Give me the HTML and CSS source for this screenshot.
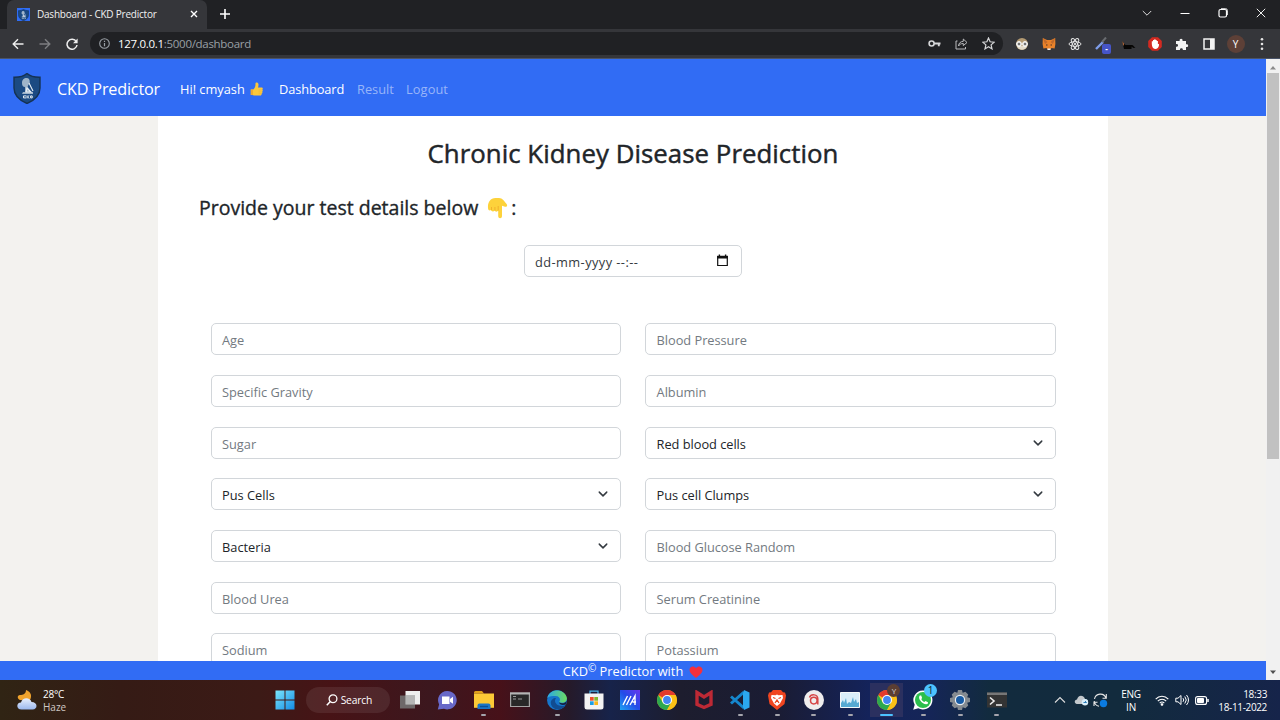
FILE: index.html
```
<!DOCTYPE html>
<html lang="en">
<head>
<meta charset="utf-8">
<title>Dashboard - CKD Predictor</title>
<link rel="stylesheet" href="styles.css">
</head>
<body>
<svg class="defs" width="0" height="0">
  <defs>
    <linearGradient id="win" x1="0" y1="0" x2="1" y2="1"><stop offset="0" stop-color="#7be6fb"/><stop offset="1" stop-color="#138be6"/></linearGradient>
    <linearGradient id="edge" x1="0" y1="0" x2="1" y2="0"><stop offset="0" stop-color="#2aa7e8"/><stop offset="1" stop-color="#6cdc60"/></linearGradient>
    <linearGradient id="mapp" x1="0" y1="1" x2="1" y2="0"><stop offset="0" stop-color="#1fa5f5"/><stop offset=".5" stop-color="#234be8"/><stop offset="1" stop-color="#6a35ee"/></linearGradient>
    <linearGradient id="cloud" x1="0" y1="0" x2="0" y2="1"><stop offset="0" stop-color="#e8effc"/><stop offset="1" stop-color="#9bb8ee"/></linearGradient>
    <symbol id="shield" viewBox="0 0 28 31">
      <path d="M14 .5C10.500 3.500 5.500 4.300 1 4.200V15c0 7.500 6 12.500 13 15.500 7-3 13-8 13-15.500V4.200C22.500 4.300 17.500 3.500 14 .5z" fill="#1b4a82" stroke="#153253" stroke-width="1.400"/>
      <path d="M9 10c0-3.500 2-5 4.500-5s3.500 2 3.200 4.500c-.3 2-2 2.500-2 4.500l3.300 5h2v2H9l1-2h2v-5c-2 0-3-1.500-3-4z" fill="#9fb4c9"/>
      <path d="M16 10l4 8M14 15l-1 4h5z" stroke="#e8eff5" stroke-width="1.100" fill="none"/>
      <path d="M13 22.900h-2.500v2H13M14 22.400v3M16.300 22.400L14.500 24l1.800 1.400M17.600 22.900v2h1.600v-2z" fill="none" stroke="#e6edf2" stroke-width="1"/>
    </symbol>
    <symbol id="chrome" viewBox="0 0 20 20">
      <circle cx="10" cy="10" r="10" fill="#fbc116"/>
      <path d="M10 10L1.340 5A10 10 0 0 1 18.660 5z" fill="#e33b2e"/>
      <path d="M1.340 5A10 10 0 0 0 10 20l4.300-7.500L10 10 5.700 12.500z" fill="#2da94f"/>
      <path d="M10 5h8.660A10 10 0 0 1 10 20l4.330-7.500z" fill="#fbc116"/>
      <circle cx="10" cy="10" r="5" fill="#fff"/><circle cx="10" cy="10" r="3.900" fill="#4285f4"/>
    </symbol>
    <symbol id="chev" viewBox="0 0 16 16"><path d="M2 5l6 6 6-6" fill="none" stroke="#343a40" stroke-width="2.300" stroke-linecap="round" stroke-linejoin="round"/></symbol>
  </defs>
</svg>

<div class="tabstrip">
  <div class="tab">
    <span class="favicon"><svg width="11" height="12"><use href="#shield"/></svg></span>
    <span class="tab-title">Dashboard - CKD Predictor</span>
    <svg class="tab-close" width="8" height="8" viewBox="0 0 8 8"><path d="M1 1l6 6M7 1L1 7" stroke="#fff" stroke-width="1.400"/></svg>
  </div>
  <svg class="newtab" width="12" height="12" viewBox="0 0 12 12"><path d="M6 1v10M1 6h10" stroke="#fff" stroke-width="1.600"/></svg>
  <div class="winctl">
    <svg width="10" height="10" viewBox="0 0 10 10"><path d="M.8 3L5 7.200 9.200 3" fill="none" stroke="#ddd"/></svg>
    <svg width="10" height="10" viewBox="0 0 10 10"><path d="M.5 5.500h9" stroke="#fff"/></svg>
    <svg width="10" height="10" viewBox="0 0 10 10"><rect x="1" y="1.500" width="7.500" height="7.500" rx="1.500" fill="none" stroke="#fff" stroke-width="1.200"/><path d="M3 .6h4.500a2 2 0 0 1 2 2V7" fill="none" stroke="#fff" stroke-width=".8"/></svg>
    <svg width="10" height="10" viewBox="0 0 10 10"><path d="M.8.8l8.400 8.400M9.200.8L.8 9.200" stroke="#eee"/></svg>
  </div>
</div>

<div class="toolbar">
  <svg class="nav-ic" width="12" height="12" viewBox="0 0 12 12"><path d="M11.500 6H1.500M6 1.200L1.200 6 6 10.800" fill="none" stroke="#eee" stroke-width="1.400"/></svg>
  <svg class="nav-ic" width="12" height="12" viewBox="0 0 12 12"><path d="M.5 6h10M6 1.200L10.800 6 6 10.800" fill="none" stroke="#7d7e81" stroke-width="1.400"/></svg>
  <svg class="nav-ic" width="12" height="12" viewBox="0 0 12 12"><path d="M10.300 3.600A5 5 0 1 0 11 7" fill="none" stroke="#eee" stroke-width="1.500"/><path d="M11.600.5v4.700H7z" fill="#eee"/></svg>
  <div class="omnibox">
    <svg width="11" height="11" viewBox="0 0 11 11"><circle cx="5.500" cy="5.500" r="4.800" fill="none" stroke="#9aa0a6" stroke-width="1.100"/><path d="M5.500 5v3.200M5.500 2.700v1.200" stroke="#9aa0a6" stroke-width="1.200"/></svg>
    <span class="url">127.0.0.1<i>:5000/dashboard</i></span>
    <div class="omni-icons">
      <svg width="13" height="13" viewBox="0 0 13 13"><circle cx="3.600" cy="6.500" r="2.500" fill="none" stroke="#d5d6d8" stroke-width="1.600"/><path d="M6 6.500h6.500M10.800 6.500v2.800" stroke="#d5d6d8" stroke-width="1.900"/></svg>
      <svg width="13" height="13" viewBox="0 0 13 13"><path d="M2.500 4H1v8h9.500v-2" fill="none" stroke="#b9babc"/><path d="M3.500 9c.3-3 2-4.500 4.800-4.700V2L12 5.500 8.300 8.600V6.500C6 6.500 4.600 7.300 3.500 9z" fill="none" stroke="#b9babc"/></svg>
      <svg width="13" height="13" viewBox="0 0 13 13"><path d="M6.500 1l1.600 3.800 4.100.4-3.100 2.700.9 4-3.500-2.100L3 11.900l.9-4L.8 5.200l4.100-.4z" fill="none" stroke="#d5d6d8" stroke-width="1.200"/></svg>
    </div>
  </div>
  <div class="exts">
    <svg viewBox="0 0 14 14"><circle cx="7" cy="7" r="6" fill="#b39a72"/><path d="M2 9h10c-1 5-9 5-10 0z" fill="#e3dccb"/><circle cx="4" cy="7" r="2.400" fill="#ccc" stroke="#fff"/><circle cx="10" cy="7" r="2.400" fill="#ccc" stroke="#fff"/><path d="M3 7h2M9 7h2" stroke="#555" stroke-width="1.400"/></svg>
    <svg viewBox="0 0 14 14"><path d="M.8 1L5 3h4l4.200-2 .2 6-.8 4.500L9.500 11 8 13H6l-1.500-2-3.100.5L.6 7z" fill="#e8822a"/><path d="M.8 1l4.700 4L3 7zM13.200 1L8.500 5 11 7z" fill="#c06a2b"/><path d="M5.500 11.500h3V13h-3z" fill="#eee"/><path d="M4 8h1.500M8.500 8H10" stroke="#493129"/></svg>
    <svg viewBox="0 0 14 14" fill="none" stroke="#e6e6e6"><ellipse cx="7" cy="7" rx="6" ry="2.300"/><ellipse cx="7" cy="7" rx="6" ry="2.300" transform="rotate(60 7 7)"/><ellipse cx="7" cy="7" rx="6" ry="2.300" transform="rotate(120 7 7)"/><circle cx="7" cy="7" r="1" fill="#fff" stroke="none"/></svg>
    <span class="picker"><svg viewBox="0 0 14 14"><path d="M1 12l7-7" stroke="#7e9de8" stroke-width="2.400"/><path d="M7 5l4-4.500" stroke="#696c70" stroke-width="2"/></svg><b>-</b></span>
    <svg viewBox="0 0 14 14"><path d="M.3 4l1.500 2.500L3.500 8h6.300c2 0 1.500 2.300 3.700 2.200-1.500 1.300-3 .8-3.800-.7L9.500 12H2L1.300 9z" fill="#060504"/><path d="M.3 4l1.900 3L1.200 9z" fill="#b86b3d"/></svg>
    <svg viewBox="0 0 14 14"><path d="M4 .2h6L13.800 4v6L10 13.800H4L.2 10V4z" fill="#d42a21"/><path d="M3.800 7V4.300h1.200V3h1.300v-.8h1.200V3h1.200v1h1.200v3.200l1.200-.5c0 3.300-1.400 5-3.300 5.300C5.300 12 3.800 10 3.800 7z" fill="#fff"/></svg>
    <svg viewBox="0 0 14 14"><path d="M1 4h3.700c-.8-3 3.600-3 2.800 0H11v3.300c2.900-.8 2.900 3.400 0 2.700V13H7.800c.7-2.500-3.500-2.500-2.800 0H1V9.800c2.700.6 2.700-3.300 0-2.600z" fill="#f3f3f3"/></svg>
    <svg viewBox="0 0 14 14"><path d="M2 2h10v10H2z" fill="none" stroke="#f3f3f3" stroke-width="1.500"/><path d="M8 2h4v10H8z" fill="#f3f3f3"/></svg>
    <span class="avatar">Y</span>
    <svg viewBox="0 0 14 14" fill="#e6e6e6"><circle cx="7" cy="2.300" r="1.300"/><circle cx="7" cy="7" r="1.300"/><circle cx="7" cy="11.700" r="1.300"/></svg>
  </div>
</div>

<div class="viewport">
  <div class="page">
    <nav class="navbar">
      <svg class="logo" width="28" height="31"><use href="#shield"/></svg>
      <span class="brand">CKD Predictor</span>
      <span class="link hi">Hi! cmyash</span>
      <svg class="thumb" width="13" height="14" viewBox="0 0 13 14"><path d="M.8 7.500h2.500C5 6 5.500 4.500 5.500 1.500 5.500 0 8.300.2 8.500 2.500c.1 1.400-.3 2.200-.6 3h3.800c1.300 0 1.400 1.900.5 2.300.9.500.7 1.700-.1 2 .6.600.3 1.600-.5 1.800.3.900-.3 2-1.300 2H5c-1.500 0-2-.6-4.200-.6z" fill="#fcc83c"/><path d="M.8 7.500H3V13H.8z" fill="#f0ab31"/><path d="M8.500 7.900h3.300M8.500 9.900h3.300M8.500 11.700h2.700" stroke="#eeb030" stroke-width=".5"/></svg>
      <span class="link dash">Dashboard</span>
      <span class="link dim result">Result</span>
      <span class="link dim logout">Logout</span>
    </nav>
    <main class="sheet">
      <h1>Chronic Kidney Disease Prediction</h1>
      <h2><span>Provide your test details below</span><svg width="21" height="22" viewBox="0 0 21 22"><path d="M1 11C.5 6 3 1 8.500 1h3.500c3.500 0 5.500 3.500 7.600 6 1.500 2.300-.6 3.500-2.300 2.500l-2.300-.8V19c0 3-3.800 3-3.800 0v-5.500c-.6 1.500-3.200 1.500-3.500 0-.8 1.300-3.300 1.300-3.700-.5C3 14 1 13.500 1 11z" fill="#fdd23b"/><path d="M4.500 13v-3M7.900 13.500V10M11.200 13.500V9" stroke="#efa82a" stroke-width=".8"/></svg><span>:</span></h2>
      <div class="field date"><span>dd-mm-yyyy --:--</span><svg width="13" height="13" viewBox="0 0 13 13"><path d="M1.700 2.500h9.600v9H1.700z" fill="none" stroke="#111" stroke-width="1.200"/><path d="M1.200 1.800h10.600v2.700H1.200zM2.700.5h1.400v2H2.700zM8.900.5h1.400v2H8.900z" fill="#111"/></svg></div>
      <form class="grid">
        <div class="field">Age</div><div class="field">Blood Pressure</div>
        <div class="field">Specific Gravity</div><div class="field">Albumin</div>
        <div class="field">Sugar</div><div class="field select">Red blood cells<svg width="10" height="10"><use href="#chev"/></svg></div>
        <div class="field select">Pus Cells<svg width="10" height="10"><use href="#chev"/></svg></div><div class="field select">Pus cell Clumps<svg width="10" height="10"><use href="#chev"/></svg></div>
        <div class="field select">Bacteria<svg width="10" height="10"><use href="#chev"/></svg></div><div class="field">Blood Glucose Random</div>
        <div class="field">Blood Urea</div><div class="field">Serum Creatinine</div>
        <div class="field">Sodium</div><div class="field">Potassium</div>
      </form>
    </main>
    <footer class="footer"><span>CKD<sup>©</sup> Predictor with</span><svg width="14" height="12" viewBox="0 0 14 12"><path d="M7 12C3 9 .5 6.800.5 3.800.5.400 5-.8 7 2.300 9-.8 13.500.400 13.500 3.800 13.500 6.800 11 9 7 12z" fill="#f5303d"/></svg></footer>
  </div>
  <div class="scrollbar">
    <svg width="8" height="5" viewBox="0 0 8 5"><path d="M1 4.500L4 1l3 3.500z" fill="#8b8b8b"/></svg>
    <div class="thumbbar"></div>
    <svg width="8" height="5" viewBox="0 0 8 5"><path d="M1 .5L4 4 7 .5z" fill="#505050"/></svg>
  </div>
</div>

<div class="taskbar">
  <div class="weather">
    <svg width="22" height="22" viewBox="0 0 22 22"><path d="M10 1c3 1 7 4 4 10H4C1 10 1 6 4 6c3 0 6-1 6-5z" fill="#f0a32d"/><path d="M5.500 20.500C0 20.500 0 13.500 5 13.500 6.500 8 14 8 15.500 13c6.500 0 6.500 7.500 1 7.500z" fill="url(#cloud)"/></svg>
    <div><p>28°C</p><p class="haze">Haze</p></div>
  </div>
  <div class="apps">
    <span class="app start"><svg viewBox="0 0 20 20"><path d="M.5.5h9v9h-9zM10.500.5h9v9h-9zM.5 10.500h9v9h-9zM10.500 10.500h9v9h-9z" fill="url(#win)"/></svg></span>
    <span class="search"><svg width="12" height="12" viewBox="0 0 12 12"><circle cx="7" cy="4.800" r="3.900" fill="none" stroke="#fff" stroke-width="1.300"/><path d="M4.300 7.600L.8 11.200" stroke="#fff" stroke-width="1.500"/></svg>Search</span>
    <span class="app"><svg viewBox="0 0 20 20"><path d="M5.500 1H20v13.500H5.500z" fill="#eee"/><path d="M0 5.500h15V18.500H0z" fill="#777" opacity=".85"/><path d="M5.500 5.500H15v9H5.500z" fill="#b5b5b5"/></svg></span>
    <span class="app"><svg viewBox="0 0 20 20"><path d="M10 1a9.200 9.200 0 1 1-3 17.700L.8 19.500l1.300-5A9.200 9.200 0 0 1 10 1z" fill="#6868c8"/><path d="M5 6.500h7.500v7.500H5zM13 9l3-2.200v7L13 11.700z" fill="#fff"/></svg></span>
    <span class="app run"><svg viewBox="0 0 20 20"><path d="M0 2.500q0-1.500 1.500-1.500H8l2 2.500H0z" fill="#e2a11b"/><path d="M0 3.500h20v14.300H0z" fill="#fcc936"/><path d="M3.500 19v-3.500q0-2 2-2h9q2 0 2 2V19z" fill="#1b75c8"/><path d="M6 15.800h8v1.400H6z" fill="#0b4f97"/></svg></span>
    <span class="app"><svg viewBox="0 0 20 20"><path d="M.6 3.100h18.800v13.400H.6z" fill="#282828" stroke="#a3a3a3" stroke-width="1.200"/><path d="M0 2.500h20v2H0z" fill="#b5b5b5"/><path d="M3 6.500h3M3 9h3M8 9h4" stroke="#999"/></svg></span>
    <span class="app run"><svg viewBox="0 0 20 20"><circle cx="10" cy="10" r="10" fill="#1675cb"/><path d="M.3 8C2-2 18-2 19.900 8c.4 4-4 6-7.900 4 2-1.800 1-6-3.500-6-3.200 0-6 0-8.200 2z" fill="url(#edge)"/><path d="M9 8c-3 4 1 8.500 6.500 8 1.500 0 2.500-.5 3-.8-3 5-10 5.600-13.500 1.300C2 12 5 8 9 8z" fill="#114c91"/><path d="M12 12.500c3 1.500 6 .8 7.600-1.500l-.8 3.400c-3 1-6.300.5-6.800-1.900z" fill="#17203c"/></svg></span>
    <span class="app"><svg viewBox="0 0 20 20"><path d="M6 4V1.200h8V4" fill="none" stroke="#4bb5ed" stroke-width="1.200"/><path d="M.5 3.500h19V17q0 2.500-2.500 2.500H3Q.5 19.500.5 17z" fill="#f3f3f3"/><path d="M6 7h3.700v3.700H6z" fill="#ed512a"/><path d="M10.300 7H14v3.700h-3.700z" fill="#80b82f"/><path d="M6 11.300h3.700V15H6z" fill="#1b9fe5"/><path d="M10.300 11.300H14V15h-3.700z" fill="#f9b51a"/></svg></span>
    <span class="app"><svg viewBox="0 0 20 20"><path d="M0 0h20v20H0z" fill="url(#mapp)"/><path d="M3 15L7.500 6M6.500 15L11 6M10 15l5-9V15M12.500 12H16" stroke="#fff" stroke-width="1.400" fill="none"/></svg></span>
    <span class="app"><svg><use href="#chrome"/></svg></span>
    <span class="app"><svg viewBox="0 0 20 20"><path d="M3 2.500L10 7l7-4.500v11.800L10 17.500l-7-3.200z" fill="none" stroke="#bd2935" stroke-width="3.400"/></svg></span>
    <span class="app run"><svg viewBox="0 0 20 20"><path d="M1 6.500L14 18M1 13.500L14 2" stroke="#1587ce" stroke-width="3"/><path d="M14 0l5.500 2.400v15.200L14 20l-1-3V3z" fill="#2ba8ef"/></svg></span>
    <span class="app run"><svg viewBox="0 0 20 20"><path d="M6 0h8l2 2.200 2 .3 1 3-1.500 8.500L10 20l-7.500-6L1 5.500l1-3 2-.3z" fill="#f04520"/><path d="M4.500 5l4 .2L10 4.500l1.500.7 4-.2.500 3-3 5.500L10 16l-3-2.500L4 8z" fill="#fff"/><path d="M6 7.500l2.500 1M14 7.500l-2.500 1M8 13l2-3 2 3" stroke="#e8431e" fill="none" stroke-width="1.300"/></svg></span>
    <span class="app run"><svg viewBox="0 0 20 20"><circle cx="10" cy="10" r="10" fill="#efeded"/><circle cx="9.800" cy="10.600" r="3.300" fill="none" stroke="#d64646" stroke-width="1.500"/><path d="M5.500 7.500c1.500-4 8.300-3.500 8.300 1.500v5.500" fill="none" stroke="#d64646" stroke-width="1.500"/></svg></span>
    <span class="app run"><svg viewBox="0 0 20 20"><path d="M.5 2.500h19v15H.5z" fill="#d9edf8" stroke="#f5f7f8"/><path d="M1 17v-4l2-3 1 3 2-5 1 6 2-2 2 1 2-6 1 5 2-3 1 4 2-1v5z" fill="#56a9d2"/></svg></span>
    <span class="app run active"><svg><use href="#chrome"/></svg><b class="mini">Y</b></span>
    <span class="app run"><svg viewBox="0 0 20 20"><path d="M10 .5a9.500 9.500 0 1 1-4.700 17.800L.2 19.800l1.500-5A9.500 9.500 0 0 1 10 .5z" fill="#fff"/><circle cx="10" cy="10" r="8" fill="#2cbf4d"/><path d="M6.800 5.500c-3 3 4 10.500 8 8.300l.2-1.600-2.500-1.300-1.200 1c-1.500-.5-2.500-1.600-3-3l.8-1-.9-2.500z" fill="#fff"/></svg><b class="count">1</b></span>
    <span class="app run"><svg viewBox="0 0 20 20"><path d="M8 0h4l.7 2.700 2.700-1 2.800 2.800-1 2.800L20 8v4l-2.800.7 1 2.800-2.800 2.800-2.700-1L12 20H8l-.7-2.700-2.700 1-2.800-2.800 1-2.800L0 12V8l2.800-.7-1-2.800 2.800-2.800 2.700 1z" fill="#858b91"/><circle cx="10" cy="10" r="5.200" fill="#e8edf2"/><circle cx="10" cy="10" r="4" fill="#175ba5"/></svg></span>
    <span class="app run"><svg viewBox="0 0 20 20"><path d="M0 2.500h20v15H0z" fill="#343434"/><path d="M0 2.500h20V5H0z" fill="#777"/><path d="M3 7.500l4 3.500-4 3.500M9 15h6" fill="none" stroke="#eee" stroke-width="1.600"/></svg></span>
  </div>
  <div class="tray">
    <svg width="12" height="8" viewBox="0 0 12 8"><path d="M1 6.500l5-5 5 5" fill="none" stroke="#ddd" stroke-width="1.100"/></svg>
    <svg class="od" width="15" height="12" viewBox="0 0 15 12"><path d="M3 10C-.5 9.500.500 5.500 3 5.500 4 .5 9.500.5 11 5c3.500 0 4 5 .5 5z" fill="#c3c8cc"/><circle cx="11" cy="8.300" r="3.200" fill="#d8eefa"/><path d="M9.500 8.500h3M11 7l1.500 1.500" stroke="#2b7db8"/></svg>
    <svg class="sync" width="15" height="15" viewBox="0 0 15 15"><path d="M1.500 6A6 6 0 0 1 13 5M13.300 1v4.200H9.500M1.200 8A6 6 0 0 0 6 13.200M1 13V9.200h3.500" fill="none" stroke="#e7e7e7" stroke-width="1.100"/><circle cx="10.500" cy="10.500" r="3.700" fill="#0b7be0"/></svg>
    <p class="lang">ENG<br>IN</p>
    <svg class="wifi" width="14" height="11" viewBox="0 0 14 11" fill="none" stroke="#fff" stroke-width="1.100"><path d="M.7 4.200c3.500-4 9-4 12.600 0M2.800 6.200c2.500-2.700 6-2.700 8.400 0M4.700 8.100c1.500-1.500 3.200-1.500 4.600 0"/><circle cx="7" cy="9.500" r=".8" fill="#fff"/></svg>
    <svg class="vol" width="14" height="12" viewBox="0 0 14 12" fill="none" stroke="#fff" stroke-width="1"><path d="M.8 4.200H3L6 1.500v9L3 7.800H.8zM8 4.200q1.500 1.800 0 3.600M9.800 2.500q3 3.500 0 7M11.500 1q4 5 0 10"/></svg>
    <svg width="14" height="9" viewBox="0 0 14 9"><rect x=".6" y=".6" width="11" height="7.800" rx="2" fill="none" stroke="#fff" stroke-width="1.100"/><rect x="2" y="2" width="7" height="5" rx="1" fill="#fff"/><path d="M13 3v3" stroke="#fff" stroke-width="1.500"/></svg>
    <p class="clock">18:33<br><span>18-11-2022</span></p>
  </div>
</div>
</body>
</html>
```
FILE: styles.css
```
* { box-sizing: border-box; }
body { margin: 0; width: 1280px; height: 720px; overflow: hidden; display: flex; flex-direction: column; font-family: "Open Sans", "Noto Sans", sans-serif; color: #212529; }
p, h1, h2 { margin: 0; }
svg { display: block; flex: none; }
.defs { position: absolute; }

.tabstrip { height: 29px; flex: none; background: #202124; display: flex; align-items: center; }
.tab { width: 200px; height: 29px; margin-left: 7px; background: #35363a; border-radius: 7px 7px 0 0; display: flex; align-items: center; padding: 0 9px 0 10px; }
.favicon { width: 13px; height: 13px; background: #2f6df4; display: flex; justify-content: center; align-items: center; }
.tab-title { color: #f1f1f1; font-size: 10px; letter-spacing: -.22px; margin: -2px 0 0 7px; white-space: nowrap; flex: 1; }
.tab-close { margin-top: -1px; }
.newtab { margin: -1px 0 0 12px; }
.winctl { margin-left: auto; display: flex; gap: 28px; padding-right: 14px; margin-top: -4px; }

.toolbar { height: 30px; flex: none; background: #35363a; border-bottom: 1px solid #4a5468; display: flex; align-items: center; }
.nav-ic { margin-left: 12px; }
.nav-ic + .nav-ic { margin-left: 15px; }
.omnibox { width: 913px; height: 23px; margin-left: 12px; border-radius: 12px; background: #202124; display: flex; align-items: center; padding: 0 8px 0 9px; }
.url { color: #fff; font-size: 11.500px; letter-spacing: -.3px; margin-left: 8px; }
.url i { font-style: normal; color: #9aa0a6; }
.omni-icons { margin-left: auto; display: flex; gap: 14px; }
.exts { display: flex; align-items: center; gap: 12.700px; margin-left: 12px; }
.exts > svg, .picker svg { width: 14px; height: 14px; }
.picker { position: relative; width: 14px; }
.picker b { position: absolute; left: 7px; top: 7px; width: 9px; height: 10px; border-radius: 2px; background: #4655c8; color: #fff; font-size: 8px; line-height: 9px; text-align: center; }
.avatar { width: 18px; height: 18px; margin: 0 -2px; border-radius: 50%; background: #5d4037; color: #fff; font-size: 10px; line-height: 18px; text-align: center; }

.viewport { height: 621px; flex: none; display: flex; }
.page { width: 1266px; display: flex; flex-direction: column; background: #f3f2ef; }
.navbar { height: 57px; flex: none; background: #316cf4; display: flex; align-items: center; padding: 2px 0 0 13px; color: #fff; white-space: nowrap; }
.brand { font-size: 16.200px; margin-left: 16px; width: 123px; letter-spacing: -.18px; }
.link { font-size: 12.800px; }
.hi { width: 70px; }
.thumb { width: 13px; margin-right: 16px; }
.dash { width: 78px; letter-spacing: -.1px; }
.result { width: 49px; }
.logout { letter-spacing: .1px; }
.dim { color: #98b5f9; }

.sheet { width: 950px; height: 545px; flex: none; overflow: hidden; margin-left: 158px; background: #fff; padding: 18px 40px 0; display: flex; flex-direction: column; }
.sheet > * { flex: none; }
h1 { font-weight: 500; font-size: 25.800px; letter-spacing: .04px; line-height: 38px; text-align: center; white-space: nowrap; -webkit-text-stroke: .45px #212529; }
h2 { font-weight: 500; font-size: 19.500px; line-height: 30px; margin-top: 21px; padding-left: 1px; display: flex; align-items: center; white-space: nowrap; -webkit-text-stroke: .35px #212529; }
h2 svg { margin: 0 3px 0 9px; -webkit-text-stroke: 0; }
.field { height: 32px; border: 1px solid #d2d6da; border-radius: 5px; padding: 2px 11px 0 10px; display: flex; align-items: center; justify-content: space-between; font-size: 12.800px; color: #737a81; white-space: nowrap; }
.field:nth-child(even) { padding-left: 10.600px; letter-spacing: -.03px; }
.select { color: #212529; }
.field.select { padding-right: 12px; }
.field.select svg { margin-top: -2px; }
.sheet .date { width: 218px; margin: 22px auto 0; color: #343a40; padding-left: 10px; letter-spacing: .43px; }
.date svg { margin-top: -3px; }
.date { padding-right: 12px; }
.grid { display: grid; grid-template-columns: 410px 411px; column-gap: 24px; row-gap: 19.700px; margin: 46.300px 0 0 13px; }
.footer { height: 19px; flex: none; background: #316cf4; color: #fff; font-size: 12.800px; line-height: 19px; display: flex; align-items: center; justify-content: center; gap: 6px; padding-top: 2px; white-space: nowrap; }
.footer sup { font-size: 10px; line-height: 0; vertical-align: 4px; }

.scrollbar { width: 14px; background: #f1f1f1; display: flex; flex-direction: column; align-items: center; padding: 6px 0 5px; }
.thumbbar { width: 12px; height: 386px; margin: 3px 0 auto; background: #c1c1c1; }

.taskbar { height: 40px; flex: none; position: relative; display: flex; color: #fff; font-size: 10px; background: linear-gradient(90deg, #302414 0, #351b15 120px, #3c1a16 260px, #471316 330px, #3c171e 430px, #471119 500px, #251a2a 570px, #17234a 610px, #1d1d2e 680px, #1a1c34 780px, #14235b 870px, #152557 930px, #122b3e 990px, #122b3d 1120px, #16244a 1280px); }
.weather { width: 266.500px; padding-left: 16px; display: flex; align-items: center; gap: 5px; }
.weather p { line-height: 13px; letter-spacing: -.2px; padding-top: 1px; margin-bottom: -1px; }
.weather .haze { color: #cfc8c4; letter-spacing: 0; }
.apps { display: flex; align-items: center; }
.app { position: relative; width: 36.650px; height: 34px; display: flex; align-items: center; justify-content: center; }
.app svg { width: 20px; height: 20px; }
.run::after { content: ""; position: absolute; bottom: 1px; left: 16px; width: 5px; height: 2px; border-radius: 1px; background: #a5a5ad; }
.active { background: linear-gradient(90deg, transparent 2px, #2b305f 2px, #2b305f 35px, transparent 35px); }
.active::after { left: 12px; width: 13px; background: #4cc2ff; }
.mini, .count { position: absolute; left: 19px; top: 1px; width: 13px; height: 13px; border-radius: 50%; font-weight: 400; font-size: 8px; line-height: 13px; text-align: center; background: #5b3e33; color: #ddd; }
.count { background: #4cc2ff; color: #10202c; font-size: 10px; }
.search { width: 84px; height: 26px; margin: 0 2.500px; border-radius: 13px; background: rgba(255,255,255,.08); display: flex; align-items: center; gap: 3px; padding-left: 20px; font-size: 10.300px; letter-spacing: -.2px; }
.tray { flex: 1; display: flex; align-items: center; padding: 0 13px 0 39px; }
.od { margin-left: 8px; }
.sync { margin-left: 4px; }
.lang { width: 36px; margin-left: 5px; text-align: center; line-height: 13px; letter-spacing: -.2px; padding-top: 1px; }
.wifi { margin-left: 6px; }
.vol { margin: 0 6px; }
.clock { margin-left: auto; text-align: right; line-height: 13px; letter-spacing: -.35px; white-space: nowrap; padding-top: 1px; }
```
